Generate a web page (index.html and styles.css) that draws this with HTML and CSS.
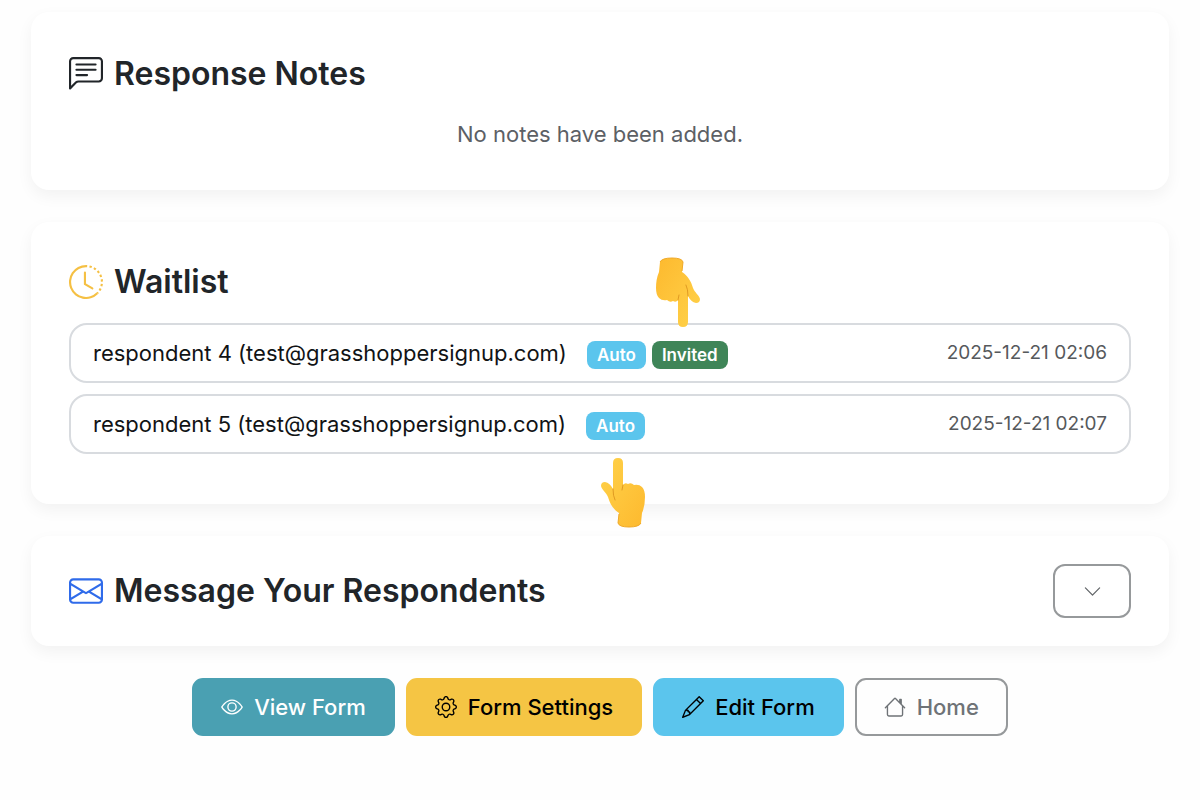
FILE: index.html
```html
<!doctype html>
<html lang="en">

<head>
    <meta charset="utf-8">
    <title>Form Responses</title>
    <meta name="viewport" content="width=device-width,initial-scale=1">
    <link rel="stylesheet" href="styles.css">
</head>

<body>
    <!-- shared hand drawing, used by both pointers -->
    <svg class="defs" aria-hidden="true">
        <defs>
            <linearGradient id="skin" x1="0" y1="0" x2="1" y2="1">
                <stop offset="0" stop-color="#ffd24a" />
                <stop offset="1" stop-color="#fdb92e" />
            </linearGradient>
            <symbol id="hand" viewBox="0 0 44 70">
                <path fill="url(#skin)" d="M12 5q0-5 5-5t5 5v22q2-3 5-1 3-2 6 1 5-1 8 2 3 3 3 10 0 9-3 16l-1 10q-1 4-12 4-10 0-11-4l1-10C12 51 9 46 7 39 5 34 1 32 0 28q0-4 4-4 5 1 8 7z" />
                <path fill="none" stroke="#e09a22" stroke-width="1" stroke-linecap="round" d="M12 31q0 7 2 11M22 27l-1 5" />
                <path fill="none" stroke="#f0a928" stroke-width="1" d="M18 56l-1 9q1 4 11 4t12-4" />
            </symbol>
        </defs>
    </svg>

    <main class="page">
        <section class="card">
            <h2 class="title">
                <svg class="title-icon" viewBox="0 0 16 16" aria-hidden="true">
                    <path d="M14 1a1 1 0 0 1 1 1v8a1 1 0 0 1-1 1H4.414A2 2 0 0 0 3 11.586l-2 2V2a1 1 0 0 1 1-1zM2 0a2 2 0 0 0-2 2v12.793a.5.5 0 0 0 .854.353l2.853-2.853A1 1 0 0 1 4.414 12H14a2 2 0 0 0 2-2V2a2 2 0 0 0-2-2z" />
                    <path d="M3 3.5a.5.5 0 0 1 .5-.5h9a.5.5 0 0 1 0 1h-9a.5.5 0 0 1-.5-.5M3 6a.5.5 0 0 1 .5-.5h9a.5.5 0 0 1 0 1h-9A.5.5 0 0 1 3 6m0 2.5a.5.5 0 0 1 .5-.5h5a.5.5 0 0 1 0 1h-5a.5.5 0 0 1-.5-.5" />
                </svg>
                Response Notes
            </h2>
            <p class="empty">No notes have been added.</p>
        </section>

        <section class="card card-waitlist">
            <h2 class="title">
                <svg class="title-icon icon-warning" viewBox="0 0 16 16" aria-hidden="true">
                    <path d="M8.515 1.019A7 7 0 0 0 8 1V0a8 8 0 0 1 .589.022zm2.004.45a7 7 0 0 0-.985-.299l.219-.976q.576.129 1.126.342zm1.37.71a7 7 0 0 0-.439-.27l.493-.87a8 8 0 0 1 .979.654l-.615.789a7 7 0 0 0-.418-.302zm1.834 1.79a7 7 0 0 0-.653-.796l.724-.69q.406.429.747.91zm.744 1.352a7 7 0 0 0-.214-.468l.893-.45a8 8 0 0 1 .45 1.088l-.95.313a7 7 0 0 0-.179-.483m.53 2.507a7 7 0 0 0-.1-1.025l.985-.17q.1.58.116 1.17zm-.131 1.538q.05-.254.081-.51l.993.123a8 8 0 0 1-.23 1.155l-.964-.267q.069-.247.12-.501m-.952 2.379q.276-.436.486-.908l.914.405q-.24.54-.555 1.038zm-.964 1.205q.183-.183.35-.378l.758.653a8 8 0 0 1-.401.432z" />
                    <path d="M8 1a7 7 0 1 0 4.95 11.95l.707.707A8.001 8.001 0 1 1 8 0z" />
                    <path d="M7.5 3a.5.5 0 0 1 .5.5v5.21l3.248 1.856a.5.5 0 0 1-.496.868l-3.5-2A.5.5 0 0 1 7 9V3.5a.5.5 0 0 1 .5-.5" />
                </svg>
                Waitlist
            </h2>
            <ul class="waitlist">
                <li class="entry">
                    <span class="entry-name">respondent 4 (test@grasshoppersignup.com)</span>
                    <span class="badges">
                        <span class="badge badge-auto">Auto</span>
                        <span class="badge badge-invited">Invited
                            <svg class="hand hand-down" aria-hidden="true"><use href="#hand" /></svg>
                        </span>
                    </span>
                    <time class="entry-time" datetime="2025-12-21T02:06">2025-12-21 02:06</time>
                </li>
                <li class="entry">
                    <span class="entry-name">respondent 5 (test@grasshoppersignup.com)</span>
                    <span class="badges">
                        <span class="badge badge-auto">Auto
                            <svg class="hand hand-up" aria-hidden="true"><use href="#hand" /></svg>
                        </span>
                    </span>
                    <time class="entry-time" datetime="2025-12-21T02:07">2025-12-21 02:07</time>
                </li>
            </ul>
        </section>

        <section class="card card-message">
            <h2 class="title">
                <svg class="title-icon icon-primary" viewBox="0 0 16 16" aria-hidden="true">
                    <path d="M0 4a2 2 0 0 1 2-2h12a2 2 0 0 1 2 2v8a2 2 0 0 1-2 2H2a2 2 0 0 1-2-2zm2-1a1 1 0 0 0-1 1v.217l7 4.2 7-4.2V4a1 1 0 0 0-1-1zm13 2.383-4.708 2.825L15 11.105zm-.034 6.876-5.64-3.471L8 9.583l-1.326-.795-5.64 3.47A1 1 0 0 0 2 13h12a1 1 0 0 0 .966-.741M1 11.105l4.708-2.897L1 5.383z" />
                </svg>
                Message Your Respondents
            </h2>
            <button class="toggle" type="button" aria-label="Show message form">
                <svg class="toggle-icon" viewBox="0 0 16 16" aria-hidden="true">
                    <path d="M1.646 4.646a.5.5 0 0 1 .708 0L8 10.293l5.646-5.647a.5.5 0 0 1 .708.708l-6 6a.5.5 0 0 1-.708 0l-6-6a.5.5 0 0 1 0-.708" />
                </svg>
            </button>
        </section>

        <nav class="actions">
            <a class="btn btn-view" href="#">
                <svg class="btn-icon" viewBox="0 0 16 16" aria-hidden="true">
                    <path d="M16 8s-3-5.5-8-5.5S0 8 0 8s3 5.5 8 5.5S16 8 16 8M1.173 8a13 13 0 0 1 1.66-2.043C4.12 4.668 5.88 3.5 8 3.5s3.879 1.168 5.168 2.457A13 13 0 0 1 14.828 8q-.086.13-.195.288c-.335.48-.83 1.12-1.465 1.755C11.879 11.332 10.119 12.5 8 12.5s-3.879-1.168-5.168-2.457A13 13 0 0 1 1.172 8z" />
                    <path d="M8 5.5a2.5 2.5 0 1 0 0 5 2.5 2.5 0 0 0 0-5M4.5 8a3.5 3.5 0 1 1 7 0 3.5 3.5 0 0 1-7 0" />
                </svg>
                View Form
            </a>
            <a class="btn btn-settings" href="#">
                <svg class="btn-icon" viewBox="0 0 16 16" aria-hidden="true">
                    <path d="M8 4.754a3.246 3.246 0 1 0 0 6.492 3.246 3.246 0 0 0 0-6.492M5.754 8a2.246 2.246 0 1 1 4.492 0 2.246 2.246 0 0 1-4.492 0" />
                    <path d="M9.796 1.343c-.527-1.79-3.065-1.79-3.592 0l-.094.319a.873.873 0 0 1-1.255.52l-.292-.16c-1.64-.892-3.433.902-2.54 2.541l.159.292a.873.873 0 0 1-.52 1.255l-.319.094c-1.79.527-1.79 3.065 0 3.592l.319.094a.873.873 0 0 1 .52 1.255l-.16.292c-.892 1.64.901 3.434 2.541 2.54l.292-.159a.873.873 0 0 1 1.255.52l.094.319c.527 1.79 3.065 1.79 3.592 0l.094-.319a.873.873 0 0 1 1.255-.52l.292.16c1.64.893 3.434-.902 2.54-2.541l-.159-.292a.873.873 0 0 1 .52-1.255l.319-.094c1.79-.527 1.79-3.065 0-3.592l-.319-.094a.873.873 0 0 1-.52-1.255l.16-.292c.893-1.64-.902-3.433-2.541-2.54l-.292.159a.873.873 0 0 1-1.255-.52zm-2.633.283c.246-.835 1.428-.835 1.674 0l.094.319a1.873 1.873 0 0 0 2.693 1.115l.291-.16c.764-.415 1.6.42 1.184 1.185l-.159.292a1.873 1.873 0 0 0 1.116 2.692l.318.094c.835.246.835 1.428 0 1.674l-.319.094a1.873 1.873 0 0 0-1.115 2.693l.16.291c.415.764-.42 1.6-1.185 1.184l-.291-.159a1.873 1.873 0 0 0-2.693 1.116l-.094.318c-.246.835-1.428.835-1.674 0l-.094-.319a1.873 1.873 0 0 0-2.692-1.115l-.292.16c-.764.415-1.6-.42-1.184-1.185l.159-.291A1.873 1.873 0 0 0 1.945 8.93l-.319-.094c-.835-.246-.835-1.428 0-1.674l.319-.094A1.873 1.873 0 0 0 3.06 4.377l-.16-.292c-.415-.764.42-1.6 1.185-1.184l.292.159a1.873 1.873 0 0 0 2.692-1.115z" />
                </svg>
                Form Settings
            </a>
            <a class="btn btn-edit" href="#">
                <svg class="btn-icon" viewBox="0 0 16 16" aria-hidden="true">
                    <path d="M12.146.146a.5.5 0 0 1 .708 0l3 3a.5.5 0 0 1 0 .708l-10 10a.5.5 0 0 1-.168.11l-5 2a.5.5 0 0 1-.65-.65l2-5a.5.5 0 0 1 .11-.168zM11.207 2.5 13.5 4.793 14.793 3.5 12.5 1.207zm1.586 3L10.5 3.207 4 9.707V10h.5a.5.5 0 0 1 .5.5v.5h.5a.5.5 0 0 1 .5.5v.5h.293zm-9.761 5.175-.106.106-1.528 3.821 3.821-1.528.106-.106A.5.5 0 0 1 5 12.5V12h-.5a.5.5 0 0 1-.5-.5V11h-.5a.5.5 0 0 1-.468-.325" />
                </svg>
                Edit Form
            </a>
            <a class="btn btn-home" href="#">
                <svg class="btn-icon" viewBox="0 0 16 16" aria-hidden="true">
                    <path d="M8.707 1.5a1 1 0 0 0-1.414 0L.646 8.146a.5.5 0 0 0 .708.708L2 8.207V13.5A1.5 1.5 0 0 0 3.5 15h9a1.5 1.5 0 0 0 1.5-1.5V8.207l.646.647a.5.5 0 0 0 .708-.708L13 5.793V2.5a.5.5 0 0 0-.5-.5h-1a.5.5 0 0 0-.5.5v1.293zM13 7.207V13.5a.5.5 0 0 1-.5.5h-9a.5.5 0 0 1-.5-.5V7.207l5-5z" />
                </svg>
                Home
            </a>
        </nav>
    </main>
</body>

</html>
```
FILE: styles.css
```css
* {
    box-sizing: border-box;
}

body {
    margin: 0;
    font-family: Inter, "Liberation Sans", sans-serif;
    font-size: 22px;
    line-height: 32px;
    color: #212529;
    background: #fefefe;
}

.defs {
    position: absolute;
    width: 0;
    height: 0;
}

.page {
    display: flex;
    flex-direction: column;
    gap: 32px;
    padding: 12px 31px;
}

.card {
    padding: 40px 38px;
    background: white;
    border-radius: 18px;
    box-shadow: 0 6px 16px rgba(0, 0, 0, 0.05);
}

.card-waitlist {
    padding-top: 38px;
    padding-bottom: 50px;
}

.card-message {
    display: flex;
    align-items: center;
    justify-content: space-between;
    padding-top: 28px;
    padding-bottom: 28px;
}

.title {
    display: flex;
    align-items: center;
    gap: 11px;
    margin: 0;
    font-size: 32px;
    font-weight: 600;
    line-height: 44px;
}

.title-icon {
    width: 34px;
    height: 34px;
    fill: currentColor;
}

.icon-warning {
    color: #f5c044;
}

.icon-primary {
    color: #2f6bea;
}

.empty {
    margin: 22px 0 0;
    color: #5c6065;
    text-align: center;
}

/* Waitlist rows */
.waitlist {
    display: flex;
    flex-direction: column;
    gap: 11px;
    margin: 19px 0 0;
    padding: 0;
    list-style: none;
}

.entry {
    display: flex;
    align-items: center;
    gap: 20px;
    padding: 12px 22px;
    border: 2px solid #d8dbdf;
    border-radius: 18px;
}

.entry-name {
    color: #111315;
}

.badges {
    display: flex;
    gap: 6px;
    padding-top: 4px;
}

.badge {
    position: relative;
    padding: 0 10px;
    border-radius: 8px;
    color: white;
    font-size: 17px;
    font-weight: 600;
    line-height: 28px;
}

.badge-auto {
    background: #5bc5ed;
}

.badge-invited {
    background: #3f8558;
}

.entry-time {
    margin-left: auto;
    color: #56595c;
    font-size: 19px;
}

/* Hands pointing at the badges */
.hand {
    position: absolute;
    width: 44px;
    height: 70px;
}

.hand-down {
    left: 4px;
    bottom: 42px;
    transform: rotate(180deg);
}

.hand-up {
    left: 15px;
    top: 46px;
}

.toggle {
    display: flex;
    align-items: center;
    justify-content: center;
    width: 78px;
    height: 54px;
    padding: 0;
    border: 2px solid #96999b;
    border-radius: 12px;
    background: white;
    color: #5f6366;
    cursor: pointer;
}

.toggle-icon {
    width: 19px;
    height: 19px;
    fill: currentColor;
}

.actions {
    display: flex;
    flex-wrap: wrap;
    align-items: center;
    justify-content: center;
    gap: 11px;
}

.btn {
    display: flex;
    align-items: center;
    gap: 11px;
    padding: 11px 27px;
    border: 2px solid transparent;
    border-radius: 11px;
    font-weight: 500;
    text-decoration: none;
}

.btn-icon {
    width: 22px;
    height: 22px;
    fill: currentColor;
}

.btn-view {
    border-color: #4aa0b2;
    background: #4aa0b2;
    color: white;
}

.btn-settings {
    border-color: #f5c544;
    background: #f5c544;
    color: black;
}

.btn-edit {
    border-color: #5bc5ed;
    background: #5bc5ed;
    color: black;
}

.btn-home {
    border-color: #96999b;
    color: #6f7377;
}

.btn:hover,
.toggle:hover {
    opacity: 0.9;
}
```
